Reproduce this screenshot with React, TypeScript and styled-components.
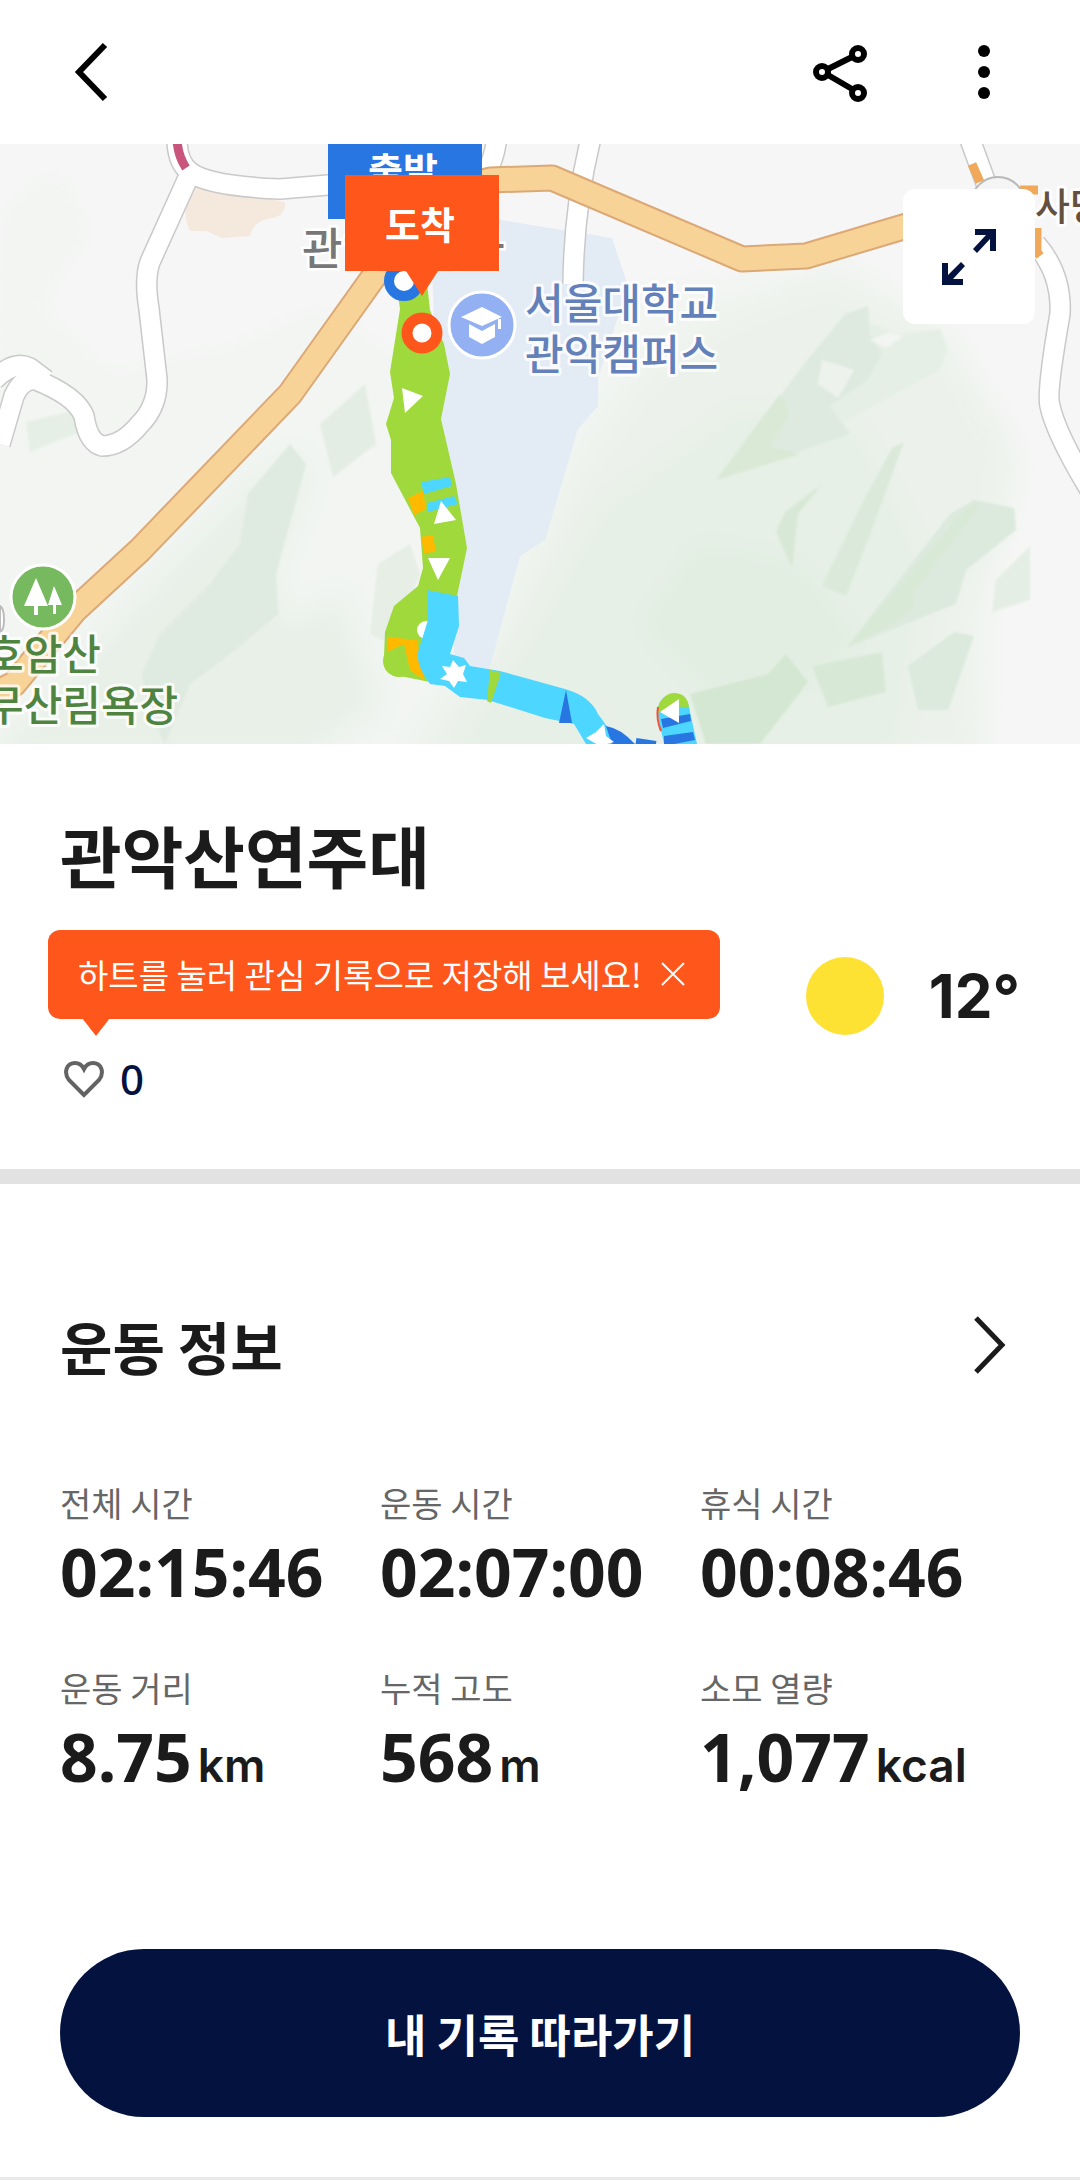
import React from "react";
import styled, { createGlobalStyle } from "styled-components";

const korean = `"Noto Sans CJK KR", sans-serif`;
const latin = `"Noto Sans", "Noto Sans CJK KR", sans-serif`;
const numeric = `Inter, "Noto Sans CJK KR", sans-serif`;

const GlobalStyle = createGlobalStyle`
  * { box-sizing: border-box; }
  body { margin: 0; background: #fff; color: #1b1b1b; font-family: ${korean}; }
  button { font: inherit; color: inherit; border: 0; padding: 0; background: none; cursor: pointer; }
  h1, h2, p, dl, dt, dd { margin: 0; }
  svg { display: block; }
`;

const Page = styled.div`
  display: flex;
  flex-direction: column;
`;

const TopBar = styled.header`
  display: flex;
  align-items: center;
  height: 144px;
  padding: 0 54px 0 60px;
`;

const IconButton = styled.button<{ $push?: boolean }>`
  display: grid;
  place-items: center;
  width: 84px;
  height: 84px;
  margin-right: ${(p) => (p.$push ? "auto" : "0")};
`;

const TopActions = styled.div`
  display: flex;
  gap: 60px;
`;

const MapArea = styled.section`
  position: relative;
  height: 600px;
  overflow: hidden;
  background: #f6f6f6;
`;

const MapSvg = styled.svg`
  width: 100%;
  height: 600px;
  font-family: ${korean};
`;

const ExpandButton = styled.button`
  position: absolute;
  top: 45px;
  right: 45px;
  display: grid;
  place-items: center;
  width: 132px;
  height: 135px;
  border-radius: 12px;
  background: #fff;
  color: #04123f;
`;

const Summary = styled.section`
  padding: 68px 60px 62px;
  border-bottom: 15px solid #e2e2e2;
`;

const Title = styled.h1`
  font-size: 67px;
  line-height: 84px;
  font-weight: 700;
`;

const SummaryRow = styled.div`
  display: flex;
  justify-content: space-between;
  align-items: flex-start;
  margin-top: 34px;
`;

const LikeColumn = styled.div`
  display: flex;
  flex-direction: column;
  align-items: flex-start;
  gap: 32px;
`;

const Tooltip = styled.div`
  position: relative;
  display: flex;
  align-items: center;
  gap: 18px;
  height: 89px;
  margin-left: -12px;
  padding: 0 34px 2px 30px;
  border-radius: 12px;
  background: #ff571b;
  color: #fff;
  font-size: 33px;
  white-space: nowrap;

  &::after {
    content: "";
    position: absolute;
    top: 88px;
    left: 34px;
    border: 14px solid transparent;
    border-top: 18px solid #ff571b;
    border-bottom: 0;
  }
`;

const LikeButton = styled.button`
  display: flex;
  align-items: center;
  gap: 16px;
  height: 56px;
  padding-left: 4px;
  color: #04123f;
  font-family: ${latin};
  font-size: 42px;
  font-weight: 500;
  line-height: 56px;
`;

const Weather = styled.div`
  display: flex;
  align-items: center;
  gap: 45px;
  height: 131px;
  font-family: ${numeric};
  font-size: 60px;
  font-weight: 700;
`;

const Sun = styled.span`
  width: 78px;
  height: 78px;
  border-radius: 50%;
  background: #fde233;
`;

const Workout = styled.section`
  padding: 119px 60px 153px;
`;

const SectionHead = styled.div`
  display: flex;
  justify-content: space-between;
  align-items: center;
  height: 84px;
`;

const SectionTitle = styled.h2`
  font-size: 57px;
  line-height: 84px;
  font-weight: 700;
`;

const ChevronButton = styled.button`
  display: grid;
  place-items: center;
  width: 60px;
  height: 84px;
`;

const Stats = styled.dl`
  display: grid;
  grid-template-columns: repeat(3, 1fr);
  row-gap: 49px;
  margin-top: 88px;
`;

const StatLabel = styled.dt`
  color: #666;
  font-size: 34px;
  line-height: 56px;
`;

const StatValue = styled.dd`
  font-family: ${latin};
  font-size: 66px;
  line-height: 80px;
  font-weight: 700;
  white-space: nowrap;
`;

const Unit = styled.span`
  margin-left: 6px;
  font-family: ${numeric};
  font-size: 46px;
  line-height: 1;
  font-weight: 600;
`;

const Footer = styled.footer`
  padding: 0 60px 60px;
  border-bottom: 3px solid #e9e9e9;
`;

const FollowButton = styled.button`
  width: 100%;
  height: 168px;
  border-radius: 84px;
  background: #04123f;
  color: #fff;
  font-size: 45px;
  font-weight: 700;
`;

const stats = [
  { label: "전체 시간", value: "02:15:46" },
  { label: "운동 시간", value: "02:07:00" },
  { label: "휴식 시간", value: "00:08:46" },
  { label: "운동 거리", value: "8.75", unit: "km" },
  { label: "누적 고도", value: "568", unit: "m" },
  { label: "소모 열량", value: "1,077", unit: "kcal" },
];

const whiteRoads = [
  "M177 -10 Q176 18 190 28 Q208 42 280 45 L340 40",
  "M188 34 L150 118 Q144 135 149 165 L157 235 Q158 262 140 280 Q122 302 102 302 Q88 298 84 272 Q76 252 36 236 Q22 234 14 252 L0 300",
  "M-6 236 Q14 216 30 224 L46 236",
  "M497 -10 Q496 12 484 34",
  "M592 -10 Q574 60 573 140",
  "M968 -10 L990 50",
  "M1036 100 Q1062 130 1060 170 Q1046 250 1050 262 Q1056 290 1090 346",
];

const hills = [
  ["#f2f5f2", "M0 70 L60 20 L90 90 L40 160 L110 230 L240 200 L320 160 L470 260 L590 150 L850 110 L960 190 L1030 320 L1000 420 L990 620 L-20 620Z"],
  ["#ecf2eb", "M640 230 L720 170 L830 130 L940 190 L1010 300 L1000 400 L970 460 L980 620 L400 620 L500 480 L570 330Z"],
  ["#e8f0e8", "M160 430 L250 340 L300 310 L306 340 L270 430 L290 480 L340 450 L380 560 L300 620 L-20 620 L60 540Z"],
  ["#e6f0e6", "M600 360 L740 260 L860 280 L930 420 L900 620 L440 620 L520 500Z"],
  ["#e2eee2", "M700 400 L800 420 L860 500 L800 540 L720 560 L640 480Z"],
];

const clearings = [
  ["#dfeae0", "M142 530 L160 490 L210 440 L240 400 L248 350 L290 300 L306 320 L276 430 L278 470 L230 510 L190 540 L165 600 L150 570Z"],
  ["#e4ede4", "M320 280 L365 240 L376 300 L333 333Z"],
  ["#e6efe6", "M26 278 L76 266 L80 288 L30 308Z"],
  ["#e6eee5", "M378 420 L410 400 L420 430 L390 500 L370 490Z"],
  ["#e6efe6", "M808 215 L845 170 L900 190 L940 185 L948 205 L940 226 L820 292 L716 336 L744 300Z"],
  ["#deeae0", "M808 215 L845 170 L868 162 L870 190 L882 210 L868 236 L830 262 L850 290 L716 336 L744 300Z"],
  ["#d9e9d6", "M716 336 L780 250 L790 270 L770 302 L800 310Z"],
  ["#d8e8d6", "M776 388 L785 368 L822 340 L798 370 L792 424Z"],
  ["#dae9da", "M822 442 L864 356 L892 304 L904 298 L870 390 L846 452Z"],
  ["#dce9dd", "M846 504 L950 370 L974 356 L1014 364 L1016 386 L966 426 L956 460 L900 482Z"],
  ["#d8e9d6", "M846 504 L968 364 L980 360 L912 450 L914 464 L890 480Z"],
  ["#e5eee4", "M992 468 L996 436 L1030 402 L1030 456Z"],
  ["#d4e7d2", "M690 550 L768 530 L786 510 L808 538 L760 600 L706 600Z"],
  ["#d8e8d6", "M812 522 L882 508 L886 548 L828 563Z"],
  ["#dce9dd", "M908 522 L954 488 L974 492 L948 566 L918 566Z"],
  ["#eef2ed", "M822 216 L854 226 L838 254 L818 240Z"],
  ["#f2f5f1", "M870 196 L890 188 L904 192 L886 204Z"],
];

function TrailMap() {
  return (
    <MapSvg viewBox="0 0 1080 600" preserveAspectRatio="xMidYMid slice" role="img" aria-label="관악산연주대 코스 지도">
      <defs>
        <filter id="hillshade" x="-10%" y="-10%" width="120%" height="120%">
          <feGaussianBlur stdDeviation="14" />
        </filter>
        <filter id="edge" x="-10%" y="-10%" width="120%" height="120%">
          <feGaussianBlur stdDeviation="1" />
        </filter>
      </defs>
      <rect width="1080" height="600" fill="#f6f6f6" />
      <g filter="url(#hillshade)">
        {hills.map(([fill, d]) => (
          <path key={d} d={d} fill={fill} />
        ))}
      </g>
      <g filter="url(#edge)">
        {clearings.map(([fill, d]) => (
          <path key={d} d={d} fill={fill} />
        ))}
      </g>
      <path d="M194 40 L285 58 Q286 72 272 74 Q254 76 250 92 L222 94 L206 87 H190 Q184 76 186 60Z" fill="#f5e8dd" />
      <path d="M430 86 L500 76 L612 94 L628 142 L598 234 L598 262 L578 285 L545 396 L520 412 L492 515 L488 530 L455 520 L440 300Z" fill="#e3ebf4" />
      <g fill="none" strokeLinejoin="round">
        {whiteRoads.map((d) => (
          <path key={d} d={d} stroke="#c9c9c9" strokeWidth="22" />
        ))}
        {whiteRoads.map((d) => (
          <path key={d} d={d} stroke="#fff" strokeWidth="19" />
        ))}
        <path d="M177 -4 Q178 12 186 24" stroke="#c9557c" strokeWidth="9" />
        {[["#dca876", 27], ["#f7d398", 23]].map(([stroke, width]) => (
          <g key={width} stroke={stroke as string} strokeWidth={width}>
            <path d="M-10 552 L14 540 L75 466 L140 406 L290 250 L390 110 L440 50 L490 36 L552 34 L742 115 L806 112 L920 78" />
          </g>
        ))}
        <path d="M972 20 L980 38 M1020 46 H1038 M1037 84 V108 L1040 112" stroke="#f0a95b" strokeWidth="9" />
      </g>
      <circle cx="998" cy="60" r="27" fill="#f5f5f5" stroke="#b9b9b9" strokeWidth="2" />
      <path d="M0 462 Q4 464 4 476 Q4 486 0 488Z" fill="#fff" stroke="#bbb" strokeWidth="2" />

      {/* recorded route, coloured by pace */}
      <path d="M394 120 L400 165 L390 228 L394 254 L386 280 L391 296 V329 L420 384 L423 424 L418 442 L394 462 L385 488 L384 512 Q384 532 400 532 L440 540 L457 452 L467 404 L456 340 L441 275 L450 230 L444 200 L430 166 L426 130Z" fill="#a0d93c" />
      <circle cx="399" cy="517" r="16" fill="#a0d93c" />
      <path d="M408 354 L423 347 L426 365 L414 371Z M421 393 L433 391 L436 408 L424 409Z M387 493 L417 496 L424 536 L410 526 L404 500 L387 508Z" fill="#ffba00" />
      <path d="M421 338 L450 333 L452 342 L424 350Z M427 359 L454 352 L458 360 L428 368Z" fill="#4dd6ff" />
      <circle cx="426" cy="486" r="9" fill="#fff" />
      <path d="M427 446 L458 452 L459 482 L450 510 L464 514 L470 522 L500 527 L565 545 Q590 552 598 570 L620 600 L586 600 L574 580 L545 574 L488 556 L460 553 L445 542 L430 540 Q416 522 418 508 L428 476Z" fill="#4dd6ff" />
      <path d="M490 526 L501 529 L491 559 L487 557Z" fill="#a0d93c" />
      <path d="M566 546 L572 579 H559Z M606 582 Q620 584 635 600 H612Z" fill="#2876e2" />
      <path d="M636 597 L656 600" stroke="#2876e2" strokeWidth="6" />
      <path d="M658 572 Q656 552 674 550 Q688 550 690 568 L697 600 H664Z" fill="#4dd6ff" />
      <path d="M657 566 Q662 549 675 549 Q688 550 689 564 Q678 560 658 569Z" fill="#a0d93c" />
      <path d="M658 563 Q656 575 661 587" stroke="#f4503a" strokeWidth="2" fill="none" />
      <path d="M661 575 L690 570 L691 577 L663 584Z M664 592 L693 588 L695 596 L664 602Z" fill="#2876e2" />
      <path d="M402 244 L423 252 L405 269Z M441 357 L456 376 L434 380Z M428 414 H450 L438 436Z M679 555 V579 L660 568Z" fill="#fff" />
      <path d="M453 516 L459 523 L466 521 L463 530 L467 538 L458 537 L454 544 L449 537 L440 535 L447 530 L442 522 L450 523Z M604 580 L606 592 L614 598 L600 602 L586 594 L596 588Z" fill="#fff" />

      <g fill="#777" stroke="#fff" strokeWidth="5" paintOrder="stroke" fontSize="44" fontWeight="500">
        <text x="302" y="121">관악산역사</text>
      </g>
      <circle cx="404" cy="137" r="15" fill="#fff" stroke="#2876e2" strokeWidth="10" />
      <rect x="328" y="-20" width="154" height="95" fill="#2876e2" />
      <text x="403" y="41" textAnchor="middle" fontSize="38" fontWeight="700" fill="#fff">출발</text>
      <path d="M345 31 H499 V127 H438 L422 152 L406 127 H345Z" fill="#ff571b" />
      <text x="420" y="95" textAnchor="middle" fontSize="38" fontWeight="700" fill="#fff">도착</text>
      <circle cx="422" cy="189" r="15" fill="#fff" stroke="#ff571b" strokeWidth="11" />

      <circle cx="482" cy="181" r="33" fill="#93b0f3" stroke="#fff" strokeWidth="3" />
      <path d="M482 163 L502 173 L482 182 L461 173Z M469 180 L482 187 L495 180 V193 L482 200 L469 193Z M498 175 H501 V185 H498Z" fill="#fff" />
      <g fontSize="42" fontWeight="500" stroke="#fff" strokeOpacity="0.8" strokeWidth="6" strokeLinejoin="round" paintOrder="stroke">
        <g fill="#6480b9">
          <text x="525" y="175">서울대학교</text>
          <text x="525" y="226">관악캠퍼스</text>
        </g>
        <g fill="#4f8440">
          <text x="-15" y="526">호암산</text>
          <text x="-15" y="577">무산림욕장</text>
        </g>
        <text x="1035" y="76" fontSize="38" fill="#65503f">사당</text>
      </g>
      <circle cx="43" cy="453" r="32" fill="#76b95f" stroke="#fff" strokeWidth="3" />
      <path d="M36 434 L48 462 H38 V471 H34 V462 H24Z M54 442 L62 461 H56 V470 H53 V461 H48Z" fill="#fff" />
    </MapSvg>
  );
}

export default function App() {
  return (
    <Page>
      <GlobalStyle />
      <TopBar>
        <IconButton $push aria-label="뒤로">
          <svg width="84" height="84" viewBox="0 0 84 84" fill="none" stroke="#000" strokeWidth="6">
            <path d="M45 15 L19 42 L45 69" />
          </svg>
        </IconButton>
        <TopActions>
          <IconButton aria-label="공유">
            <svg width="84" height="84" viewBox="0 0 84 84" fill="none" stroke="#000" strokeWidth="6">
              <circle cx="24" cy="42" r="6" />
              <circle cx="60" cy="24" r="6" />
              <circle cx="60" cy="63" r="6" />
              <path d="M30 39 L54 27 M30 45 L54 59" />
            </svg>
          </IconButton>
          <IconButton aria-label="더보기">
            <svg width="84" height="84" viewBox="0 0 84 84" fill="#000">
              <circle cx="42" cy="21" r="6" />
              <circle cx="42" cy="42" r="6" />
              <circle cx="42" cy="63" r="6" />
            </svg>
          </IconButton>
        </TopActions>
      </TopBar>

      <MapArea>
        <TrailMap />
        <ExpandButton aria-label="지도 확대">
          <svg width="60" height="60" viewBox="0 0 60 60" fill="currentColor">
            <path d="M36 2 H57 V24 H51 V12 L38 26 L34 22 L47 8 H36Z" />
            <path d="M3 36 H9 V48 L22 35 L26 39 L14 52 H24 V58 H3Z" />
          </svg>
        </ExpandButton>
      </MapArea>

      <Summary>
        <Title>관악산연주대</Title>
        <SummaryRow>
          <LikeColumn>
            <Tooltip role="status">
              하트를 눌러 관심 기록으로 저장해 보세요!
              <button aria-label="닫기">
                <svg width="26" height="26" viewBox="0 0 26 26" stroke="#fff" strokeWidth="2">
                  <path d="M2 2 L24 24 M24 2 L2 24" />
                </svg>
              </button>
            </Tooltip>
            <LikeButton aria-label="관심 0">
              <svg width="40" height="37" viewBox="0 0 40 37" fill="none" stroke="#636363" strokeWidth="4">
                <path d="M20 34 L5 19 C-1 11 3 2 11 2 C15 2 18 4 20 8 C22 4 25 2 29 2 C37 2 41 11 35 19Z" />
              </svg>
              0
            </LikeButton>
          </LikeColumn>
          <Weather>
            <Sun />
            12°
          </Weather>
        </SummaryRow>
      </Summary>

      <Workout>
        <SectionHead>
          <SectionTitle>운동 정보</SectionTitle>
          <ChevronButton aria-label="운동 정보 더보기">
            <svg width="60" height="84" viewBox="0 0 60 84" fill="none" stroke="#1b1b1b" strokeWidth="5">
              <path d="M16 15 L42 42 L16 69" />
            </svg>
          </ChevronButton>
        </SectionHead>
        <Stats>
          {stats.map((s) => (
            <div key={s.label}>
              <StatLabel>{s.label}</StatLabel>
              <StatValue>
                {s.value}
                {s.unit && <Unit>{s.unit}</Unit>}
              </StatValue>
            </div>
          ))}
        </Stats>
      </Workout>

      <Footer>
        <FollowButton>내 기록 따라가기</FollowButton>
      </Footer>
    </Page>
  );
}
